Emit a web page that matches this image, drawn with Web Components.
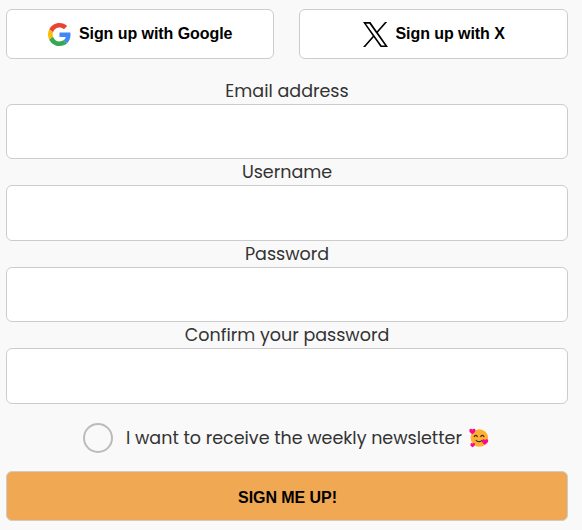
<!DOCTYPE html>
<html lang="en">
<head>
<meta charset="utf-8">
<title>Sign up</title>
<style>
    body {
        margin: 0;
        background: #f9f9f9;
        color: #333;
        font-family: Poppins, Inter, sans-serif;
        font-size: 17.5px;
    }
</style>
</head>
<body>
<signup-form>
    <social-button slot="social" label="Sign up with Google">
        <svg width="23" height="23" viewBox="0 0 48 48">
            <path fill="#EA4335" d="M24 9.5c3.54 0 6.71 1.22 9.21 3.6l6.85-6.85C35.9 2.38 30.47 0 24 0 14.62 0 6.51 5.38 2.56 13.22l7.98 6.19C12.43 13.72 17.74 9.5 24 9.5z"/>
            <path fill="#4285F4" d="M46.98 24.55c0-1.57-.15-3.09-.38-4.55H24v9.02h12.94c-.58 2.96-2.26 5.48-4.78 7.18l7.73 6c4.51-4.18 7.09-10.36 7.09-17.65z"/>
            <path fill="#FBBC05" d="M10.53 28.59c-.48-1.45-.76-2.99-.76-4.59s.27-3.14.76-4.59l-7.98-6.19C.92 16.46 0 20.12 0 24c0 3.88.92 7.54 2.56 10.78l7.97-6.19z"/>
            <path fill="#34A853" d="M24 48c6.48 0 11.93-2.13 15.89-5.81l-7.73-6c-2.15 1.45-4.92 2.3-8.16 2.3-6.26 0-11.57-4.22-13.47-9.91l-7.98 6.19C6.51 42.62 14.62 48 24 48z"/>
        </svg>
    </social-button>
    <social-button slot="social" label="Sign up with X">
        <svg width="25" height="25" viewBox="0 0 300 300" preserveAspectRatio="none">
            <path d="M178.57 127.15 290.27 0h-26.46l-97.03 110.38L89.34 0H0l117.13 166.93L0 300.25h26.46l102.4-116.59 81.8 116.59H300M36.01 19.54H76.66l187.13 262.13h-40.66"/>
        </svg>
    </social-button>

    <form-field label="Email address" type="email"></form-field>
    <form-field label="Username" type="text"></form-field>
    <form-field label="Password" type="password"></form-field>
    <form-field label="Confirm your password" type="password"></form-field>

    <round-checkbox slot="consent">I want to receive the weekly newsletter</round-checkbox>
    <submit-button slot="submit">SIGN ME UP!</submit-button>
</signup-form>

<script>
// Form layout
class SignupForm extends HTMLElement {
    constructor() {
        super();
        this.attachShadow({ mode: 'open' }).innerHTML = `
            <style>
                :host {
                    display: block;
                    padding: 9px 14px 0 6px;
                }
                .social {
                    display: grid;
                    grid-template-columns: 268px 269px;
                    gap: 25px;
                    margin-bottom: 18.55px;
                }
                .fields {
                    display: flex;
                    flex-direction: column;
                }
                .consent {
                    margin: 19.45px 0 18px;
                }
            </style>
            <div class="social"><slot name="social"></slot></div>
            <div class="fields"><slot></slot></div>
            <div class="consent"><slot name="consent"></slot></div>
            <slot name="submit"></slot>
        `;
    }
}
customElements.define('signup-form', SignupForm);

// White button with a brand icon
class SocialButton extends HTMLElement {
    constructor() {
        super();
        this.attachShadow({ mode: 'open' });
    }

    connectedCallback() {
        this.shadowRoot.innerHTML = `
            <style>
                :host { display: block; }
                button {
                    display: flex;
                    align-items: center;
                    justify-content: center;
                    gap: 7.5px;
                    width: 100%;
                    height: 50px;
                    padding: 0 0 0 0.8px;
                    border: 1px solid #ccc;
                    border-radius: 6px;
                    background: #fff;
                    color: #000;
                    font: bold 16px/18px "Liberation Sans", Arial, sans-serif;
                    letter-spacing: -0.06px;
                    cursor: pointer;
                }
                ::slotted(svg) {
                    display: block;
                    margin-top: 1px;
                }
            </style>
            <button type="button"><slot></slot><span>${this.getAttribute('label')}</span></button>
        `;
    }
}
customElements.define('social-button', SocialButton);

// Centered label over a full width input
class FormField extends HTMLElement {
    constructor() {
        super();
        this.attachShadow({ mode: 'open' });
    }

    connectedCallback() {
        this.shadowRoot.innerHTML = `
            <style>
                :host { display: block; }
                label {
                    display: block;
                    height: 26.25px;
                    line-height: 26.25px;
                    text-align: center;
                }
                input {
                    display: block;
                    box-sizing: border-box;
                    width: 100%;
                    height: 55.25px;
                    border: 1px solid #ccc;
                    border-radius: 6px;
                    background: #fff;
                    padding: 0 12px;
                    font: inherit;
                }
            </style>
            <label for="field">${this.getAttribute('label')}</label>
            <input id="field" type="${this.getAttribute('type')}">
        `;
    }
}
customElements.define('form-field', FormField);

// Round checkbox, text and the hearts emoji
class RoundCheckbox extends HTMLElement {
    constructor() {
        super();
        this.attachShadow({ mode: 'open' }).innerHTML = `
            <style>
                :host { display: block; }
                label {
                    display: flex;
                    align-items: center;
                    justify-content: center;
                    height: 30px;
                    padding-right: 2px;
                }
                input {
                    appearance: none;
                    box-sizing: border-box;
                    width: 30px;
                    height: 30px;
                    margin: 0 13px 0 0;
                    border: 2px solid #bbb;
                    border-radius: 50%;
                }
                input:checked { background: #f0a853; }
                span { white-space: nowrap; }
                svg { margin-left: 7px; }
            </style>
            <label>
                <input type="checkbox">
                <span><slot></slot></span>
                <svg width="20" height="20" viewBox="0 0 20 20">
                    <circle cx="10.3" cy="10" r="8.7" fill="#ffb02e"/>
                    <g fill="none" stroke="#402a32" stroke-width="1.1" stroke-linecap="round">
                        <path d="M5.2 8.6q1.5-2.4 3.2 0M11.7 8.6q1.6-2.4 3.3 0M7.1 12.3q3 2.7 5.9 0"/>
                    </g>
                    <g fill="#f70a8d">
                        <path d="M3.3 6.3C1.2 5 0 3.6.4 2 .8.6 2.3.3 3.3 1.5 4.4.1 6.2.5 6.4 2 6.7 3.7 5.3 5.1 3.3 6.3z"/>
                        <path d="M15.9 16.7c-2.2-1.4-3.3-2.7-2.8-4.3.5-1.4 2-1.5 2.9-.4 1.2-1.3 3-.9 3.2.6.2 1.7-1.3 3-3.3 4.1z"/>
                        <path d="M3.5 19.2c-1.6-1-2.4-2.1-2-3.3.4-1 1.5-1.1 2.2-.3.8-.9 2.2-.5 2.3.6.1 1.2-1 2.2-2.5 3z"/>
                    </g>
                </svg>
            </label>
        `;
    }
}
customElements.define('round-checkbox', RoundCheckbox);

class SubmitButton extends HTMLElement {
    constructor() {
        super();
        this.attachShadow({ mode: 'open' }).innerHTML = `
            <style>
                :host { display: block; }
                button {
                    display: block;
                    width: 100%;
                    height: 50px;
                    padding: 4px 0 0 1px;
                    border: 1px solid #ccc;
                    border-radius: 6px;
                    background: #f0a853;
                    color: #000;
                    font: bold 16px/18px "Liberation Sans", Arial, sans-serif;
                    letter-spacing: -0.06px;
                    cursor: pointer;
                }
            </style>
            <button type="submit"><slot></slot></button>
        `;
    }
}
customElements.define('submit-button', SubmitButton);
</script>
</body>
</html>
